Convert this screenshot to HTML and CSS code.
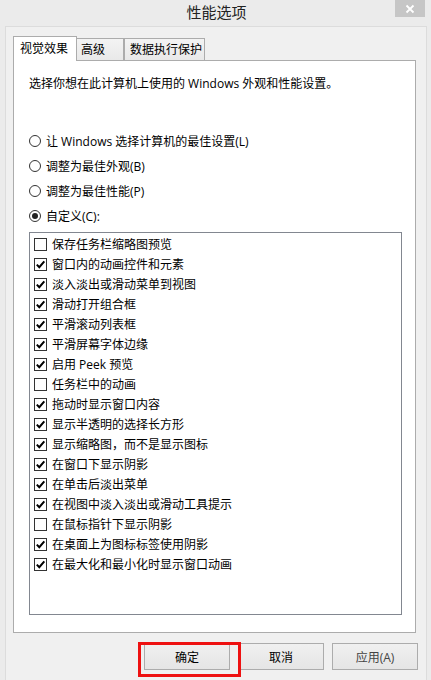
FILE: index.html
```html
<!DOCTYPE html>
<html lang="zh-CN">
<head>
<meta charset="utf-8">
<title>性能选项</title>
<link rel="stylesheet" href="styles.css">
</head>
<body>
<div class="window">
  <div class="titlebar">
    <span class="spacer"></span>
    <span class="title">性能选项</span>
    <span class="close-cell">
      <span class="close"><svg width="10" height="10" viewBox="0 0 10 10"><path d="M1.5 1.5 L8.5 8.5 M8.5 1.5 L1.5 8.5" stroke="#fff" stroke-width="1.8" fill="none"/></svg></span>
    </span>
  </div>
  <div class="client">
    <div class="tabs">
      <div class="tab active">视觉效果</div>
      <div class="tab t2">高级</div>
      <div class="tab t3">数据执行保护</div>
    </div>
    <div class="panel">
      <p class="intro">选择你想在此计算机上使用的 Windows 外观和性能设置。</p>
      <div class="radios">
        <div class="radio"><span class="rb"></span><span>让 Windows 选择计算机的最佳设置(L)</span></div>
        <div class="radio"><span class="rb"></span><span>调整为最佳外观(B)</span></div>
        <div class="radio"><span class="rb"></span><span>调整为最佳性能(P)</span></div>
        <div class="radio"><span class="rb on"></span><span>自定义(C):</span></div>
      </div>
      <div class="listbox">
        <div class="item"><span class="cb"></span><span>保存任务栏缩略图预览</span></div>
        <div class="item"><span class="cb on"><svg width="11" height="11" viewBox="0 0 11 11"><path d="M1.8 5.6 L4.3 8.2 L9.3 2.4" stroke="#000" stroke-width="2" fill="none"/></svg></span><span>窗口内的动画控件和元素</span></div>
        <div class="item"><span class="cb on"><svg width="11" height="11" viewBox="0 0 11 11"><path d="M1.8 5.6 L4.3 8.2 L9.3 2.4" stroke="#000" stroke-width="2" fill="none"/></svg></span><span>淡入淡出或滑动菜单到视图</span></div>
        <div class="item"><span class="cb on"><svg width="11" height="11" viewBox="0 0 11 11"><path d="M1.8 5.6 L4.3 8.2 L9.3 2.4" stroke="#000" stroke-width="2" fill="none"/></svg></span><span>滑动打开组合框</span></div>
        <div class="item"><span class="cb on"><svg width="11" height="11" viewBox="0 0 11 11"><path d="M1.8 5.6 L4.3 8.2 L9.3 2.4" stroke="#000" stroke-width="2" fill="none"/></svg></span><span>平滑滚动列表框</span></div>
        <div class="item"><span class="cb on"><svg width="11" height="11" viewBox="0 0 11 11"><path d="M1.8 5.6 L4.3 8.2 L9.3 2.4" stroke="#000" stroke-width="2" fill="none"/></svg></span><span>平滑屏幕字体边缘</span></div>
        <div class="item"><span class="cb on"><svg width="11" height="11" viewBox="0 0 11 11"><path d="M1.8 5.6 L4.3 8.2 L9.3 2.4" stroke="#000" stroke-width="2" fill="none"/></svg></span><span>启用 Peek 预览</span></div>
        <div class="item"><span class="cb"></span><span>任务栏中的动画</span></div>
        <div class="item"><span class="cb on"><svg width="11" height="11" viewBox="0 0 11 11"><path d="M1.8 5.6 L4.3 8.2 L9.3 2.4" stroke="#000" stroke-width="2" fill="none"/></svg></span><span>拖动时显示窗口内容</span></div>
        <div class="item"><span class="cb on"><svg width="11" height="11" viewBox="0 0 11 11"><path d="M1.8 5.6 L4.3 8.2 L9.3 2.4" stroke="#000" stroke-width="2" fill="none"/></svg></span><span>显示半透明的选择长方形</span></div>
        <div class="item"><span class="cb on"><svg width="11" height="11" viewBox="0 0 11 11"><path d="M1.8 5.6 L4.3 8.2 L9.3 2.4" stroke="#000" stroke-width="2" fill="none"/></svg></span><span>显示缩略图，而不是显示图标</span></div>
        <div class="item"><span class="cb on"><svg width="11" height="11" viewBox="0 0 11 11"><path d="M1.8 5.6 L4.3 8.2 L9.3 2.4" stroke="#000" stroke-width="2" fill="none"/></svg></span><span>在窗口下显示阴影</span></div>
        <div class="item"><span class="cb on"><svg width="11" height="11" viewBox="0 0 11 11"><path d="M1.8 5.6 L4.3 8.2 L9.3 2.4" stroke="#000" stroke-width="2" fill="none"/></svg></span><span>在单击后淡出菜单</span></div>
        <div class="item"><span class="cb on"><svg width="11" height="11" viewBox="0 0 11 11"><path d="M1.8 5.6 L4.3 8.2 L9.3 2.4" stroke="#000" stroke-width="2" fill="none"/></svg></span><span>在视图中淡入淡出或滑动工具提示</span></div>
        <div class="item"><span class="cb"></span><span>在鼠标指针下显示阴影</span></div>
        <div class="item"><span class="cb on"><svg width="11" height="11" viewBox="0 0 11 11"><path d="M1.8 5.6 L4.3 8.2 L9.3 2.4" stroke="#000" stroke-width="2" fill="none"/></svg></span><span>在桌面上为图标标签使用阴影</span></div>
        <div class="item"><span class="cb on"><svg width="11" height="11" viewBox="0 0 11 11"><path d="M1.8 5.6 L4.3 8.2 L9.3 2.4" stroke="#000" stroke-width="2" fill="none"/></svg></span><span>在最大化和最小化时显示窗口动画</span></div>
      </div>
    </div>
    <div class="buttons">
      <div class="ok-wrap">
        <button class="btn">确定</button>
        <span class="highlight"></span>
      </div>
      <button class="btn">取消</button>
      <button class="btn apply">应用(A)</button>
    </div>
  </div>
</div>
</body>
</html>
```

FILE: styles.css
```css
* { box-sizing: border-box; }
html, body {
  margin: 0;
  padding: 0;
}
body {
  width: 431px;
  height: 680px;
  overflow: hidden;
  background: #ebebeb;
  font-family: "Open Sans", "Noto Sans CJK SC", sans-serif;
  font-size: 12px;
  color: #000;
}
.window {
  width: 431px;
  height: 680px;
  display: flex;
  flex-direction: column;
}
.titlebar {
  height: 26px;
  display: grid;
  grid-template-columns: 1fr auto 1fr;
  align-items: start;
}
.title {
  font-size: 15px;
  line-height: 24px;
  color: #222;
  padding-left: 2px;
}
.close-cell {
  display: flex;
  justify-content: flex-end;
  padding-right: 6px;
}
.close {
  width: 30px;
  height: 17px;
  background: #c6c6c6;
  display: flex;
  align-items: center;
  justify-content: center;
}
.client {
  flex: 1;
  margin: 0 4px 0 5px;
  border-top: 1px solid #dcdcdc;
  border-left: 1px solid #dcdcdc;
  border-right: 1px solid #dcdcdc;
  background: #f0f0f0;
  padding: 9px 0 0 7px;
}
.tabs {
  height: 24px;
  display: flex;
  align-items: flex-end;
}
.tab {
  height: 22px;
  line-height: 21px;
  border: 1px solid #acacac;
  border-bottom: none;
  background: linear-gradient(#f3f3f3, #e9e9e9);
  padding-left: 4px;
  white-space: nowrap;
}
.tab.active {
  width: 64px;
  height: 25px;
  line-height: 23px;
  margin-bottom: -1px;
  background: #fff;
  position: relative;
  z-index: 1;
  padding-left: 6px;
}
.tab.t2 { width: 47px; border-left: none; }
.tab.t3 { width: 81px; border-left: 1px solid #acacac; padding-left: 5px; }
.panel {
  width: 403px;
  height: 573px;
  border: 1px solid #acacac;
  background: #fff;
  padding: 13px 0 0 15px;
}
.intro {
  margin: 0;
  line-height: 20px;
}
.radios {
  margin-top: 34px;
}
.radio {
  height: 25px;
  display: flex;
  align-items: center;
  gap: 5px;
}
.rb {
  width: 12px;
  height: 12px;
  border: 1px solid #333;
  border-radius: 50%;
  background: #fff;
  display: flex;
  align-items: center;
  justify-content: center;
}
.rb.on::after {
  content: "";
  width: 6px;
  height: 6px;
  border-radius: 50%;
  background: #222;
}
.listbox {
  margin-top: 4px;
  width: 373px;
  height: 383px;
  border: 1px solid #828790;
  padding: 1px 0 0 4px;
}
.item {
  height: 20px;
  display: flex;
  align-items: center;
  gap: 5px;
  white-space: nowrap;
}
.cb {
  width: 13px;
  height: 13px;
  border: 1px solid #333;
  background: #fff;
  display: flex;
  align-items: center;
  justify-content: center;
  flex: none;
}
.buttons {
  margin-top: 10px;
  display: flex;
  justify-content: flex-end;
  gap: 8px;
  padding-right: 8px;
}
.ok-wrap {
  position: relative;
  display: flex;
}
.btn {
  width: 86px;
  height: 27px;
  border: 1px solid #acacac;
  background: linear-gradient(#f0f0f0, #e5e5e5);
  font-family: "Open Sans", "Noto Sans CJK SC", sans-serif;
  font-size: 12px;
  color: #000;
  padding: 0;
  margin: 0;
}
.btn.apply { color: #444; }
.highlight {
  position: absolute;
  left: -6px;
  top: -1px;
  width: 103px;
  height: 35px;
  border: 3px solid #ee1111;
}
```
